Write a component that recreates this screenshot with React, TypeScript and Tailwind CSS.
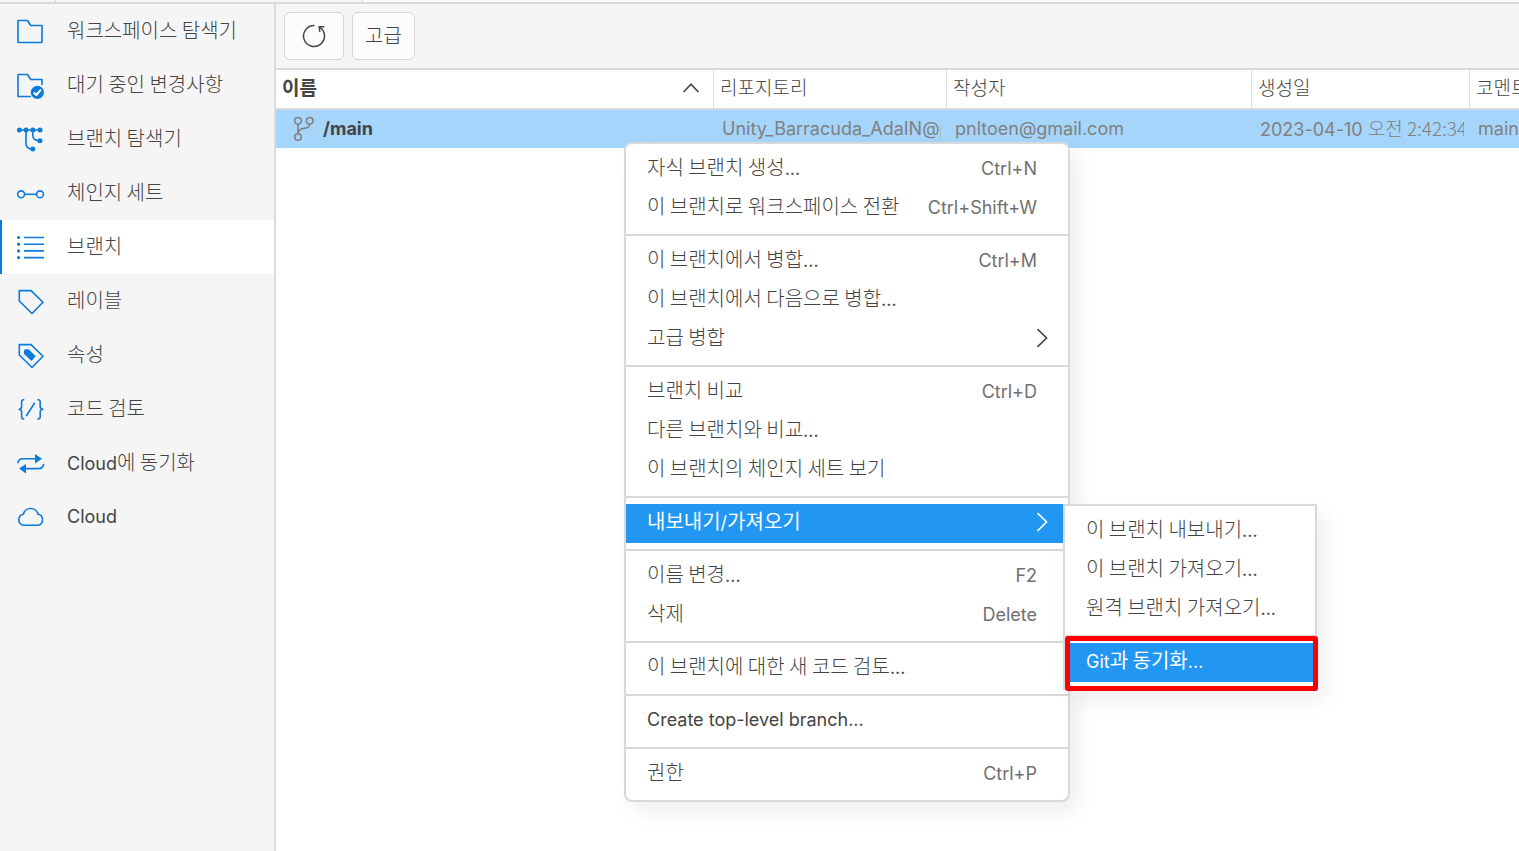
import type { ReactNode } from 'react';

interface NavItem {
  label: string;
  icon: ReactNode;
}

interface MenuEntry {
  label: string;
  shortcut?: string;
  children?: MenuEntry[][];
  active?: boolean;
}

const navItems: NavItem[] = [
  {
    label: '워크스페이스 탐색기',
    icon: <path d="M1 3.5H10.5L13.7 8.5H25V25.5H1Z" />,
  },
  {
    label: '대기 중인 변경사항',
    icon: (
      <>
        <path d="M14 25.5H1V3.5H10.5L13.7 8.5H25V14" />
        <circle cx="20.4" cy="21.3" r="6.6" fill="currentColor" stroke="none" />
        <path d="M16.7 21.5L19.3 24L24 18.7" stroke="white" strokeWidth="2" />
      </>
    ),
  },
  {
    label: '브랜치 탐색기',
    icon: (
      <>
        <path d="M2 5H23M9 5V18.5Q9 24 15.8 24M15.8 5V10.5Q15.8 15.7 23 15.7" />
        <g fill="currentColor" stroke="none">
          <circle cx="2.4" cy="5" r="2.5" />
          <circle cx="9" cy="5" r="2.5" />
          <circle cx="15.8" cy="5" r="2.5" />
          <circle cx="23" cy="5" r="2.5" />
          <circle cx="23" cy="15.7" r="2.5" />
          <circle cx="15.8" cy="24" r="2.5" />
        </g>
      </>
    ),
  },
  {
    label: '체인지 세트',
    icon: (
      <>
        <circle cx="4.1" cy="15.3" r="3.4" />
        <circle cx="23" cy="15.3" r="3.4" />
        <path d="M7.5 15.3H19.6" />
      </>
    ),
  },
  {
    label: '브랜치',
    icon: (
      <>
        <path d="M7 4.5H27M7 11.2H27M7 17.9H27M7 24.6H27" />
        <g fill="currentColor" stroke="none">
          <circle cx="1.6" cy="4.5" r="1.6" />
          <circle cx="1.6" cy="11.2" r="1.6" />
          <circle cx="1.6" cy="17.9" r="1.6" />
          <circle cx="1.6" cy="24.6" r="1.6" />
        </g>
      </>
    ),
  },
  {
    label: '레이블',
    icon: <path d="M2.3 3.6H14L26 15.3L15 26.5L2.3 14Z" />,
  },
  {
    label: '속성',
    icon: (
      <>
        <path d="M2.3 3.6H14L26 15.3L15 26.5L2.3 14Z" />
        <path d="M8 8.3H11.7L18.7 15.3L14.5 20L7 13V9.3Z" fill="currentColor" stroke="none" />
      </>
    ),
  },
  {
    label: '코드 검토',
    icon: (
      <>
        <path d="M7.3 4.8H6.6Q4.6 4.8 4.6 7V11.6Q4.6 14 2.2 14.3Q4.6 14.6 4.6 17V21.8Q4.6 24 6.6 24H7.3" />
        <path d="M20.3 4.8H21.2Q23.2 4.8 23.2 7V11.6Q23.2 14 25.8 14.3Q23.2 14.6 23.2 17V21.8Q23.2 24 21.2 24H20.3" />
        <path d="M9.3 21L17.7 7.8" />
      </>
    ),
  },
  {
    label: 'Cloud에 동기화',
    icon: (
      <>
        <path d="M0.8 14.3Q1.2 9.8 6 9.8H18M9 19.6H21Q26.2 19.6 26.7 14.8" />
        <path d="M18 5L25 9.8L18 14.4ZM9 15L2 19.6L9 24.4Z" fill="currentColor" stroke="none" />
      </>
    ),
  },
  {
    label: 'Cloud',
    icon: <path d="M6.4 22.3A5.6 5.6 0 0 1 6.4 11.3A7.4 7 0 0 1 21 11.3A5.6 5.6 0 0 1 21 22.3Z" />,
  },
];

const menuGroups: MenuEntry[][] = [
  [
    { label: '자식 브랜치 생성...', shortcut: 'Ctrl+N' },
    { label: '이 브랜치로 워크스페이스 전환', shortcut: 'Ctrl+Shift+W' },
  ],
  [
    { label: '이 브랜치에서 병합...', shortcut: 'Ctrl+M' },
    { label: '이 브랜치에서 다음으로 병합...' },
    { label: '고급 병합', children: [] },
  ],
  [
    { label: '브랜치 비교', shortcut: 'Ctrl+D' },
    { label: '다른 브랜치와 비교...' },
    { label: '이 브랜치의 체인지 세트 보기' },
  ],
  [
    {
      label: '내보내기/가져오기',
      active: true,
      children: [
        [
          { label: '이 브랜치 내보내기...' },
          { label: '이 브랜치 가져오기...' },
          { label: '원격 브랜치 가져오기...' },
        ],
        [{ label: 'Git과 동기화...', active: true }],
      ],
    },
  ],
  [
    { label: '이름 변경...', shortcut: 'F2' },
    { label: '삭제', shortcut: 'Delete' },
  ],
  [{ label: '이 브랜치에 대한 새 코드 검토...' }],
  [{ label: 'Create top-level branch...' }],
  [{ label: '권한', shortcut: 'Ctrl+P' }],
];

interface LabelProps {
  text: string;
  size?: string;
  weight?: string;
}

// Hangul runs use the CJK face, everything else stays in Inter
function Label({ text, size = 'text-[20px]', weight = 'font-light' }: LabelProps) {
  const runs = text.split(/([가-힣][가-힣 ]*)/).filter(Boolean);
  return (
    <span className="whitespace-pre">
      {runs.map((run, idx) =>
        /[가-힣]/.test(run) ? (
          <span key={idx} className={`font-['Noto_Sans_CJK_KR',sans-serif] leading-6 ${size} ${weight}`}>
            {run}
          </span>
        ) : (
          <span key={idx}>{run}</span>
        ),
      )}
    </span>
  );
}

function Sidebar() {
  return (
    <nav className="w-[276px] shrink-0 border-r-2 border-[#dcdcdc] bg-[#f5f5f5]">
      {navItems.map((item) => {
        const selected = item.label === '브랜치';
        return (
          <button
            key={item.label}
            type="button"
            aria-current={selected ? 'page' : undefined}
            className={`flex h-[54px] w-full items-center gap-[22px] border-l-2 pl-[15px] ${
              selected ? 'border-[#0b7bdc] bg-white' : 'border-transparent'
            }`}
          >
            <svg
              viewBox="0 0 28 28"
              className="h-7 w-7 shrink-0 text-[#0b7bdc]"
              fill="none"
              stroke="currentColor"
              strokeWidth="1.6"
              strokeLinejoin="round"
              aria-hidden="true"
            >
              {item.icon}
            </svg>
            <Label text={item.label} />
          </button>
        );
      })}
    </nav>
  );
}

function Toolbar() {
  return (
    <div className="flex gap-2 border-b-2 border-[#d9d9d9] bg-[#f5f5f5] p-2">
      <button
        type="button"
        aria-label="새로 고침"
        className="flex h-12 w-[60px] items-center justify-center rounded-md border border-[#d6d6d6] bg-[#fcfcfc]"
      >
        <svg viewBox="0 0 24 24" className="h-6 w-6" fill="none" stroke="currentColor" strokeWidth="1.5" aria-hidden="true">
          <path d="M12.5 1.5A10.5 10.5 0 1 0 17.6 3.1" />
          <path d="M22.3 2.7H17.2L17.8 7.8" />
        </svg>
      </button>
      <button
        type="button"
        className="flex h-12 items-center justify-center rounded-md border border-[#d6d6d6] bg-[#fcfcfc] px-3"
      >
        <Label text="고급" />
      </button>
    </div>
  );
}

function BranchTable() {
  const th = 'h-10 overflow-hidden border-b-2 border-b-[#d9d9d9] pb-0.5 pl-[6px] text-left';
  const divider = 'border-r border-r-[#dcdcdc]';
  const td = 'h-[38px] overflow-hidden whitespace-nowrap pl-2 text-[#808080]';
  return (
    <table className="w-full table-fixed border-separate border-spacing-0">
      <colgroup>
        <col className="w-[438px]" />
        <col className="w-[233px]" />
        <col className="w-[305px]" />
        <col className="w-[218px]" />
        <col />
      </colgroup>
      <thead>
        <tr>
          <th className={`${th} ${divider}`} aria-sort="ascending">
            <span className="flex items-center justify-between pr-[14px]">
              <Label text="이름" size="text-[19px]" weight="font-bold" />
              <svg viewBox="0 0 16 10" className="h-[10px] w-4" fill="none" stroke="currentColor" strokeWidth="1.6" aria-hidden="true">
                <path d="M0.6 9L8 1.2L15.4 9" />
              </svg>
            </span>
          </th>
          <th className={`${th} ${divider}`}>
            <Label text="리포지토리" size="text-[19px]" />
          </th>
          <th className={`${th} ${divider}`}>
            <Label text="작성자" size="text-[19px]" />
          </th>
          <th className={`${th} ${divider}`}>
            <Label text="생성일" size="text-[19px]" />
          </th>
          <th className={th}>
            <Label text="코멘트" size="text-[19px]" />
          </th>
        </tr>
      </thead>
      <tbody>
        <tr className="bg-[#a5d5fb]">
          <td className="h-[38px] pl-[17px] font-bold">
            <span className="flex items-center gap-2">
              <svg viewBox="0 0 22 26" className="h-[26px] w-[22px] text-[#808080]" fill="none" stroke="currentColor" strokeWidth="1.5" aria-hidden="true">
                <circle cx="5" cy="4.7" r="3.3" />
                <circle cx="16.7" cy="4.7" r="3.3" />
                <circle cx="5" cy="21" r="3.3" />
                <path d="M5 8V17.7M16.7 8Q16.5 11.8 11.5 12.2Q5.5 12.6 5 17.5" />
              </svg>
              /main
            </span>
          </td>
          <td className={td}>
            <span className="mr-[6px] block overflow-hidden">Unity_Barracuda_AdaIN@p</span>
          </td>
          <td className={td}>pnltoen@gmail.com</td>
          <td className={td}>
            <span className="mr-[6px] block overflow-hidden">
              2023-04-10{' '}
              <span className="font-['Noto_Sans_CJK_KR',sans-serif] text-[19px] leading-6 font-light">오전 2:42:34</span>
            </span>
          </td>
          <td className={td}>main</td>
        </tr>
      </tbody>
    </table>
  );
}

function MenuItem({ entry }: { entry: MenuEntry }) {
  return (
    <li role="none" className="relative">
      <button
        type="button"
        role="menuitem"
        aria-haspopup={entry.children ? 'menu' : undefined}
        className={`flex h-[39px] w-full items-center justify-between pb-1 pl-[21px] ${
          entry.children ? 'pr-5' : 'pr-[31px]'
        } ${entry.active ? 'bg-[#2196f3] text-white' : ''}`}
      >
        <Label text={entry.label} weight={entry.active ? 'font-normal' : 'font-light'} />
        {entry.shortcut && <span className="pt-0.5 text-[#707070]">{entry.shortcut}</span>}
        {entry.children && (
          <svg viewBox="0 0 12 20" className="h-5 w-3" fill="none" stroke="currentColor" strokeWidth="1.6" aria-hidden="true">
            <path d="M1.5 1.2L10.6 10L1.5 18.8" />
          </svg>
        )}
      </button>
      {entry.active && entry.children && (
        <div className="absolute top-0 left-full -ml-[5px] w-[254px] border-2 border-[#d9d9d9] bg-white shadow-[8px_10px_20px_rgba(0,0,0,0.07)]">
          <MenuGroups groups={entry.children} />
          {/* Callout around the git sync entry */}
          <div className="pointer-events-none absolute -right-[3px] -bottom-[3px] left-0 h-[55px] rounded-[3px] border-[5px] border-[#ff0000]" />
        </div>
      )}
    </li>
  );
}

function MenuGroups({ groups }: { groups: MenuEntry[][] }) {
  return (
    <div role="menu" className="divide-y-2 divide-[#d9d9d9]">
      {groups.map((group, idx) => (
        <ul key={idx} role="group" className="py-[6px]">
          {group.map((entry) => (
            <MenuItem key={entry.label} entry={entry} />
          ))}
        </ul>
      ))}
    </div>
  );
}

export default function App() {
  return (
    <div className="relative flex min-h-screen flex-col overflow-hidden bg-white font-['Inter','Noto_Sans_CJK_KR',sans-serif] text-[18px] leading-6 text-[#444444]">
      {/* Bottom edge of the tab strip */}
      <div className="flex h-1 border-b-2 border-[#d9d9d9] bg-white">
        <div className="w-14 border-r border-[#d9d9d9] bg-[#f5f5f5]" />
        <div className="w-[307px] border-r border-[#d9d9d9] bg-[#f5f5f5]" />
      </div>
      <div className="flex flex-1">
        <Sidebar />
        <main className="min-w-0 flex-1">
          <Toolbar />
          <BranchTable />
        </main>
      </div>
      {/* Context menu opened on the /main row */}
      <div className="absolute top-[142px] left-[624px] w-[446px] rounded-lg border-2 border-[#d9d9d9] bg-white shadow-[8px_10px_20px_rgba(0,0,0,0.07)]">
        <MenuGroups groups={menuGroups} />
      </div>
    </div>
  );
}
